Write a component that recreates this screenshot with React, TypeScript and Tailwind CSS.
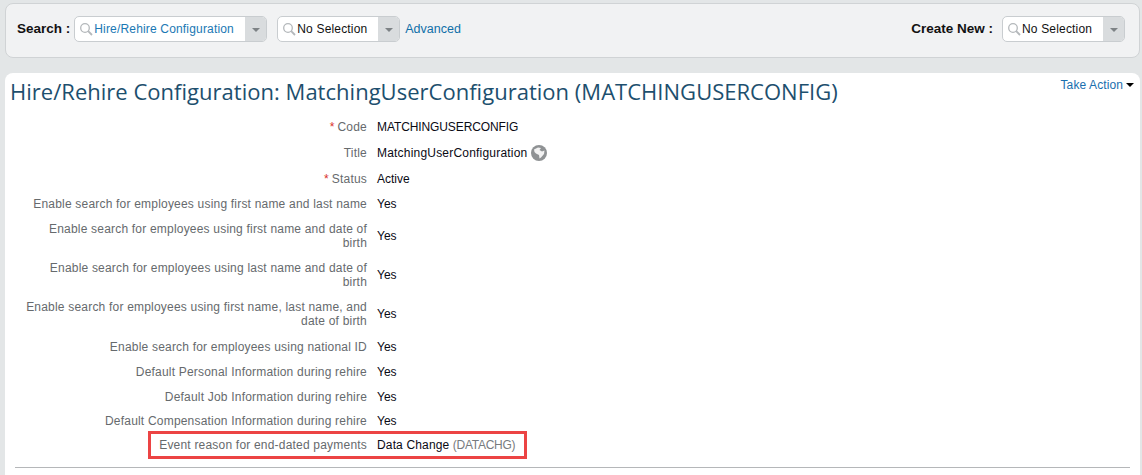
import React from "react";

const Sel = ({ text, w, blue }: { text: string; w: string; blue?: boolean }) => (
  <div className={`${w} h-[26px] flex bg-white border border-[#c9cdd0] rounded-[5px] overflow-hidden`}>
    <div className="flex-1 flex items-center min-w-0 pl-[4px]">
      <svg width="15" height="15" viewBox="0 0 15 15" fill="none" stroke="#b4b8bb" strokeWidth="1.3" className="shrink-0">
        <circle cx="6" cy="6" r="4.3" />
        <path d="M9.2 9.2 L13 13" strokeWidth="1.8" />
      </svg>
      <span className={`whitespace-nowrap tracking-[0.17px] ${blue ? "text-[#1a78b4]" : "text-[#111]"}`}>{text}</span>
    </div>
    <div className="w-[21px] bg-[#d9dcde] flex items-center justify-center">
      <div className="w-0 h-0 border-x-[4px] border-x-transparent border-t-[4px] border-t-[#7d8285] mt-[1px]" />
    </div>
  </div>
);

const rows: { l: string; v: React.ReactNode; req?: boolean; h: string }[] = [
  { l: "Code", v: <span className="tracking-[-0.1px]">MATCHINGUSERCONFIG</span>, req: true, h: "h-[26px]" },
  { l: "Title", v: <span className="flex items-center tracking-[0.2px]">MatchingUserConfiguration<svg width="16" height="16" viewBox="0 0 16 16" className="ml-[4px]"><circle cx="8" cy="8" r="8" fill="#8f9294" /><path d="M3 4.5 L7 2.5 L10 3 L8.5 5 L11 6.5 L13.5 5.5 L13 9 L10 12.5 L8.5 13.5 L8 10 L5 8.5 L3.5 7 Z" fill="#f2f2f2" /></svg></span>, h: "h-[26px]" },
  { l: "Status", v: "Active", req: true, h: "h-[25px]" },
  { l: "Enable search for employees using first name and last name", v: "Yes", h: "h-[25px]" },
  { l: "Enable search for employees using first name and date of birth", v: "Yes", h: "h-[39px]" },
  { l: "Enable search for employees using last name and date of birth", v: "Yes", h: "h-[39px]" },
  { l: "Enable search for employees using first name, last name, and date of birth", v: "Yes", h: "h-[40px]" },
  { l: "Enable search for employees using national ID", v: "Yes", h: "h-[25px]" },
  { l: "Default Personal Information during rehire", v: "Yes", h: "h-[25px]" },
  { l: "Default Job Information during rehire", v: "Yes", h: "h-[25px]" },
  { l: "Default Compensation Information during rehire", v: "Yes", h: "h-[24px]" },
];

export default function App() {
  return (
    <div className="w-[1142px] h-[475px] overflow-hidden bg-[#e3e6e7] pl-[5px] pr-[2px] pt-[3px] text-[12px] leading-[14px] font-['Liberation_Sans',Arial,sans-serif]">
      <div className="h-[55px] bg-[#f1f2f3] border border-[#d0d3d5] rounded-[8px] flex items-start justify-between pt-[12px] pl-[11px] pr-[14px]">
        <div className="flex items-center">
          <span className="font-bold text-[13.5px] text-[#111] mr-[4px]">Search :</span>
          <Sel text="Hire/Rehire Configuration" w="w-[193px]" blue />
          <div className="w-[10px]" />
          <Sel text="No Selection" w="w-[123px]" />
          <a className="text-[#0f6fa8] text-[12.5px] ml-[5px]">Advanced</a>
        </div>
        <div className="flex items-center">
          <span className="font-bold text-[13.5px] text-[#111] mr-[9px]">Create New :</span>
          <Sel text="No Selection" w="w-[123px]" />
        </div>
      </div>
      <div className="mt-[15px] h-[410px] bg-white rounded-t-[8px] relative">
        <div className="absolute right-[6px] top-[5px] flex items-center text-[#1a6fae] tracking-[0.1px]">
          Take Action
          <div className="ml-[3px] w-0 h-0 border-x-[4px] border-x-transparent border-t-[4px] border-t-black" />
        </div>
        <h1 className="pl-[5px] pt-[3px] h-[41px] text-[22px] tracking-[0.02px] leading-[30px] text-[#1d4f6e] font-['Open_Sans',sans-serif] whitespace-nowrap">
          Hire/Rehire Configuration: MatchingUserConfiguration (MATCHINGUSERCONFIG)
        </h1>
        <div className="flex flex-col">
          {rows.map((r) => (
            <div key={r.l} className={`flex items-center ${r.h}`}>
              <div className="w-[362px] pl-[18px] text-right text-[#666a6d] tracking-[0.2px]">
                {r.req && <span className="text-[#d9302a] mr-[3px]">*</span>}
                {r.l}
              </div>
              <div className="ml-[10px] text-[#0a0a14]">{r.v}</div>
            </div>
          ))}
          <div className="relative flex items-center h-[24px]">
            <div className="w-[362px] pl-[18px] text-right text-[#666a6d] tracking-[0.2px]">Event reason for end-dated payments</div>
            <div className="ml-[10px] text-[#0a0a14]">
              <span className="tracking-[0.15px]">Data Change</span> <span className="text-[#777b7e] tracking-[-0.25px]">(DATACHG)</span>
            </div>
            <div className="absolute left-[143px] top-[-2px] w-[379px] h-[28px] border-[3px] border-[#ec4444]" />
          </div>
        </div>
        <div className="mt-[10px] mx-[10px] border-t border-[#b5b7b9]" />
      </div>
    </div>
  );
}
